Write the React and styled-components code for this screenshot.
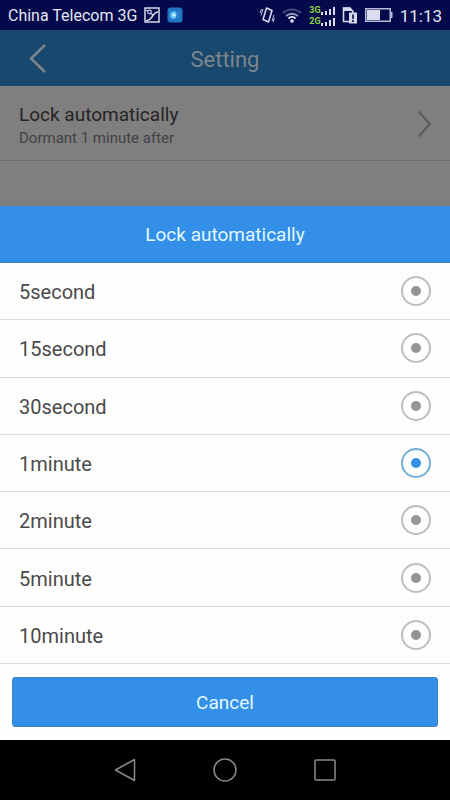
import { useState } from 'react';
import styled, { createGlobalStyle } from 'styled-components';

const colors = {
  statusBar: '#03094a',
  headerDim: '#19486f',
  headerText: '#7d858c',
  pageDim: '#807f80',
  lineDim: '#6c6c6d',
  blue: '#338fe8',
  blueDark: '#3c83c2',
  paleText: '#e2f8ff',
  text: '#4a4a4a',
  line: '#dcdadc',
  ring: '#c2bac4',
  dot: '#979397',
  ringActive: '#72afd6',
  nav: '#8a8a8a',
};

const OPTIONS = ['5second', '15second', '30second', '1minute', '2minute', '5minute', '10minute'];

const GlobalStyle = createGlobalStyle`
  * { box-sizing: border-box; }
  body { margin: 0; font-family: Roboto, 'Noto Sans', sans-serif; background: #000; }
  button { border: 0; padding: 0; background: none; font-family: inherit; cursor: pointer; }
`;

/* ===== Page ===== */
const Screen = styled.div`
  display: flex;
  flex-direction: column;
  min-height: 100vh;
`;

/* ===== Status bar ===== */
const StatusBar = styled.div`
  display: flex;
  align-items: center;
  justify-content: space-between;
  height: 30px;
  padding: 0 8px;
  background: ${colors.statusBar};
  color: #e4e6f4;
`;

const StatusGroup = styled.div`
  display: flex;
  align-items: center;
  gap: ${(p) => p.$gap};
`;

const Carrier = styled.span`
  padding-top: 2px;
  font-size: 16px;
  line-height: 20px;
  white-space: nowrap;
`;

const Clock = styled.span`
  padding-top: 2px;
  font-size: 17px;
  line-height: 20px;
`;

const Signals = styled.div`
  display: grid;
  gap: 1px;
`;

const SignalLine = styled.div`
  display: flex;
  align-items: flex-end;
  height: 10px;
  color: #8fd13c;
  font-size: 9px;
  font-weight: 700;
  line-height: 10px;
`;

/* ===== Dimmed settings page ===== */
const Header = styled.header`
  display: grid;
  grid-template-columns: 76px 1fr 76px;
  align-items: center;
  height: 56px;
  background: ${colors.headerDim};
  color: ${colors.headerText};
`;

const BackButton = styled.button`
  display: grid;
  place-items: center;
  height: 56px;
  color: inherit;
`;

const Title = styled.h1`
  margin: 0;
  padding-top: 4px;
  font-size: 22px;
  font-weight: 400;
  line-height: 28px;
  text-align: center;
`;

const Settings = styled.main`
  height: 120px;
  border-top: 1px solid #8a8480;
  background: ${colors.pageDim};
`;

const SettingRow = styled.button`
  display: flex;
  align-items: center;
  justify-content: space-between;
  width: 100%;
  height: 74px;
  padding: 0 19px;
  border-bottom: 1px solid ${colors.lineDim};
  text-align: left;
`;

const SettingText = styled.span`
  display: grid;
  padding-top: 2px;
`;

const SettingName = styled.span`
  color: #262422;
  font-size: 19px;
  line-height: 26px;
`;

const SettingHint = styled.span`
  color: #434144;
  font-size: 15px;
  line-height: 20px;
`;

/* ===== Sheet ===== */
const Sheet = styled.section`
  display: flex;
  flex: 1;
  flex-direction: column;
  background: #fefefe;
`;

const SheetTitle = styled.h2`
  margin: 0;
  padding-top: 2px;
  border-bottom: 1px solid ${colors.blueDark};
  background: ${colors.blue};
  color: ${colors.paleText};
  font-size: 19px;
  font-weight: 400;
  line-height: 54px;
  text-align: center;
`;

const OptionList = styled.div`
  display: flex;
  flex: 1;
  flex-direction: column;
`;

const OptionRow = styled.label`
  display: flex;
  flex: 1;
  align-items: center;
  justify-content: space-between;
  min-height: 57px;
  padding: 0 19px;
  border-bottom: 1px solid ${colors.line};
  cursor: pointer;
`;

const OptionName = styled.span`
  padding-top: 2px;
  color: ${colors.text};
  font-size: 20px;
  line-height: 24px;
`;

const Radio = styled.input`
  display: grid;
  place-items: center;
  width: 30px;
  height: 30px;
  margin: 0;
  border: 2px solid ${colors.ring};
  border-radius: 50%;
  appearance: none;

  &::before {
    content: '';
    width: 10px;
    height: 10px;
    border-radius: 50%;
    background: ${colors.dot};
  }
  &:checked { border-color: ${colors.ringActive}; }
  &:checked::before { background: ${colors.blue}; }
`;

const SheetFooter = styled.div`
  padding: 13px 12px;
`;

const CancelButton = styled.button`
  width: 100%;
  height: 50px;
  padding-top: 2px;
  border: 1px solid ${colors.blueDark};
  border-radius: 3px;
  background: ${colors.blue};
  color: ${colors.paleText};
  font-size: 19px;
  line-height: 24px;
`;

/* ===== Navigation bar ===== */
const NavBar = styled.nav`
  display: flex;
  justify-content: center;
  height: 60px;
  background: #000;
`;

const NavButton = styled.button`
  display: grid;
  place-items: center;
  width: 100px;
  height: 60px;
  color: ${colors.nav};
`;

/* ===== Icons ===== */
const PictureIcon = () => (
  <svg width="16" height="16" viewBox="0 0 16 16" fill="none" stroke="#d5d7ea" strokeWidth="1.5">
    <rect x="1" y="1" width="14" height="14" />
    <circle cx="5.5" cy="5" r="1.8" strokeWidth="1.2" />
    <path d="M14 5C11 5 9.500 7.500 8 10S4.500 13.500 2 14" />
    <path d="M2 3l2 1M7 6.500l2.500 2" strokeWidth="1.2" />
  </svg>
);

const AppIcon = () => (
  <svg width="16" height="16" viewBox="0 0 16 16">
    <rect x="0.5" y="0.5" width="15" height="15" rx="3" fill="#2277c4" />
    <path d="M3 8a4 4 0 0 1 4-4c2 0 2.5 2 2.5 4S9 12 7 12a4 4 0 0 1-4-4z" fill="#5bbdf2" />
    <circle cx="7" cy="8" r="1.8" fill="#c8f1ff" />
    <path d="M11 4v8" stroke="#3a92da" />
  </svg>
);

const VibrateIcon = () => (
  <svg width="16" height="18" viewBox="0 0 16 18" fill="none" stroke="#d5d7ea">
    <path d="M7.500 2l5.500 2.500-3.500 11.500-5.500-2.500z" strokeWidth="1.600" strokeLinejoin="round" />
    <path d="M4 3L2 9.500M2.500 3L1 7M15 9l-2 6M15.500 12l-1.500 4" strokeWidth="0.900" />
  </svg>
);

const WifiIcon = () => (
  <svg width="20" height="16" viewBox="0 0 20 16" fill="none" strokeWidth="2">
    <path d="M1 6a13 13 0 0 1 18 0" stroke="#444b7c" />
    <path d="M4 9a9 9 0 0 1 12 0" stroke="#9599b9" />
    <path d="M6.500 11.500a5 5 0 0 1 7 0" stroke="#e4e6f4" />
    <circle cx="10" cy="14" r="1.800" fill="#e4e6f4" />
  </svg>
);

const BarsIcon = () => (
  <svg width="14" height="9" viewBox="0 0 14 9" fill="#dcdef0">
    <path d="M0 6h2v3H0zM4 5h2v4H4zM8 3h2v6H8zM12 1h2v8h-2z" />
  </svg>
);

const SimIcon = () => (
  <svg width="16" height="18" viewBox="0 0 16 18">
    <path d="M9 15.500H1.500V2H8l3 3.500V7" fill="none" stroke="#d5d7ea" strokeWidth="1.600" />
    <path d="M1 1.500h7l3 3.500H1z" fill="#d5d7ea" />
    <rect x="7" y="6.500" width="8" height="11" fill="#d5d7ea" />
    <path d="M11 8.500v4.500M11 14v2" stroke="#03094a" strokeWidth="1.600" />
  </svg>
);

const BatteryIcon = () => (
  <svg width="28" height="14" viewBox="0 0 28 14">
    <rect x="0.750" y="0.750" width="24.500" height="12.500" fill="none" stroke="#b9bcd6" strokeWidth="1.500" />
    <rect x="2" y="2" width="13" height="10" fill="#dcdef0" />
    <path d="M26 4h1.500v6H26z" fill="#b9bcd6" />
  </svg>
);

const BackIcon = () => (
  <svg width="18" height="30" viewBox="0 0 18 30" fill="none" stroke="currentColor" strokeWidth="2.500">
    <path d="M16 2L2 15.500 16 29" />
  </svg>
);

const ChevronIcon = () => (
  <svg width="14" height="28" viewBox="0 0 14 28" fill="none" stroke="#5a5a5c" strokeWidth="2">
    <path d="M1.500 1.500L13 14 1.500 26.500" />
  </svg>
);

const NavBackIcon = () => (
  <svg width="24" height="24" viewBox="0 0 24 24" fill="none" stroke="currentColor" strokeWidth="1.500" strokeLinejoin="round">
    <path d="M21.500 1.500v21L2.500 12z" />
  </svg>
);

const NavHomeIcon = () => (
  <svg width="24" height="24" viewBox="0 0 24 24" fill="none" stroke="currentColor" strokeWidth="1.500">
    <circle cx="12" cy="12" r="11" />
  </svg>
);

const NavRecentIcon = () => (
  <svg width="24" height="24" viewBox="0 0 24 24" fill="none" stroke="currentColor" strokeWidth="1.500">
    <rect x="2" y="2" width="20" height="20" rx="1" />
  </svg>
);

export default function App() {
  const [selected, setSelected] = useState('1minute');

  return (
    <Screen>
      <GlobalStyle />
      <StatusBar>
        <StatusGroup $gap="7px">
          <Carrier>China Telecom 3G</Carrier>
          <PictureIcon />
          <AppIcon />
        </StatusGroup>
        <StatusGroup $gap="7px">
          <VibrateIcon />
          <WifiIcon />
          <Signals>
            <SignalLine>3G<BarsIcon /></SignalLine>
            <SignalLine>2G<BarsIcon /></SignalLine>
          </Signals>
          <SimIcon />
          <BatteryIcon />
          <Clock>11:13</Clock>
        </StatusGroup>
      </StatusBar>

      <Header>
        <BackButton type="button" aria-label="Back"><BackIcon /></BackButton>
        <Title>Setting</Title>
      </Header>

      <Settings>
        <SettingRow type="button">
          <SettingText>
            <SettingName>Lock automatically</SettingName>
            <SettingHint>Dormant 1 minute after</SettingHint>
          </SettingText>
          <ChevronIcon />
        </SettingRow>
      </Settings>

      <Sheet role="dialog" aria-labelledby="sheet-title">
        <SheetTitle id="sheet-title">Lock automatically</SheetTitle>
        <OptionList role="radiogroup" aria-labelledby="sheet-title">
          {OPTIONS.map((option) => (
            <OptionRow key={option}>
              <OptionName>{option}</OptionName>
              <Radio
                type="radio"
                name="lock-delay"
                value={option}
                checked={selected === option}
                onChange={() => setSelected(option)}
              />
            </OptionRow>
          ))}
        </OptionList>
        <SheetFooter>
          <CancelButton type="button">Cancel</CancelButton>
        </SheetFooter>
      </Sheet>

      <NavBar>
        <NavButton type="button" aria-label="Back"><NavBackIcon /></NavButton>
        <NavButton type="button" aria-label="Home"><NavHomeIcon /></NavButton>
        <NavButton type="button" aria-label="Recent apps"><NavRecentIcon /></NavButton>
      </NavBar>
    </Screen>
  );
}
